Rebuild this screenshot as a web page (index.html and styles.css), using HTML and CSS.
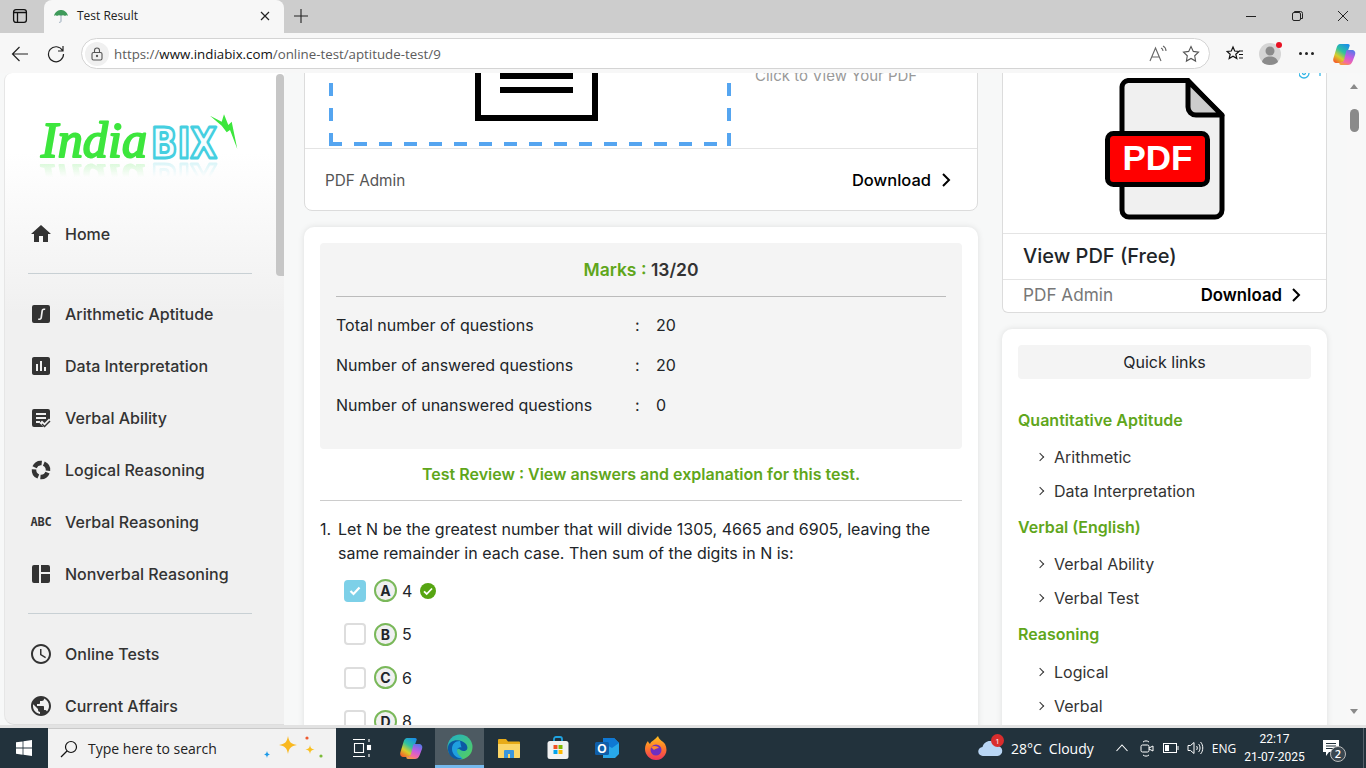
FILE: index.html
```html
<!DOCTYPE html>
<html lang="en">
<head>
	<meta charset="UTF-8">
	<title>Test Result</title>
	<link rel="stylesheet" href="styles.css">
</head>
<body>
<div class="window">
	<!-- tab strip -->
	<div class="tabstrip">
		<div class="tab-toggle">
			<svg width="16" height="16" viewBox="0 0 16 16" fill="none" stroke="#111" stroke-width="1.300"><rect x="1.600" y="1.600" width="12.800" height="12.800" rx="2.400"/><path d="M1.600 4.500h12.800M5.500 4.500v9.900"/></svg>
		</div>
		<div class="tab">
			<svg class="tab-favicon" width="16" height="16" viewBox="0 0 16 16"><path d="M1 8C2 3 6 2 8 2s6 1 7 6c-1-1-2-1-3 0-1-1-3-1-4 0-1-1-3-1-4 0-1-1-2-1-3 0z" fill="#3f9a5a"/><path d="M8 7v6c0 1-1 2-2 1" fill="none" stroke="#9ab" stroke-width="1"/></svg>
			<span class="tab-title">Test Result</span>
			<svg width="10" height="10" viewBox="0 0 10 10" stroke="#222" stroke-width="1.200"><path d="M1 1l8 8M9 1l-8 8"/></svg>
		</div>
		<svg class="tab-plus" width="14" height="14" viewBox="0 0 14 14" stroke="#222" stroke-width="1.100"><path d="M7 0v14M0 7h14"/></svg>
		<div class="win-controls">
			<svg width="46" height="12" viewBox="0 0 46 12" stroke="#222" stroke-width="1"><path d="M18 6.500h10"/></svg>
			<svg width="46" height="12" viewBox="0 0 46 12" fill="none" stroke="#222" stroke-width="1"><rect x="18.500" y="2.500" width="8" height="8" rx="1.500"/><path d="M20.500 2.500v-1h6a2 2 0 0 1 2 2v5h-1.500"/></svg>
			<svg width="46" height="12" viewBox="0 0 46 12" stroke="#222" stroke-width="1"><path d="M18 1l10 10M28 1L18 11"/></svg>
		</div>
	</div>

	<!-- address bar -->
	<div class="toolbar">
		<svg class="tool-back" width="18" height="18" viewBox="0 0 18 18" fill="none" stroke="#222" stroke-width="1.200"><path d="M17 9H1.500M8.500 2L1.500 9l7 7"/></svg>
		<svg class="tool-reload" width="18" height="18" viewBox="0 0 18 18" fill="none" stroke="#222" stroke-width="1.200"><path d="M15.500 5.500A7.500 7.500 0 1 0 16.500 9M16 1v5h-5"/></svg>
		<div class="omnibox">
			<span class="lock">
				<svg width="14" height="14" viewBox="0 0 14 14" fill="none" stroke="#555" stroke-width="1.100"><rect x="2" y="5.500" width="10" height="7.500" rx="1.500"/><path d="M4.500 5.500V3.500a2.500 2.500 0 0 1 5 0v2"/><circle cx="7" cy="9" r=".6" fill="#555"/></svg>
			</span>
			<span class="url">https://<b>www.indiabix.com</b>/online-test/aptitude-test/9</span>
			<svg class="omni-read" width="20" height="18" viewBox="0 0 20 18" fill="none" stroke="#666" stroke-width="1.100"><path d="M1 16L6.500 3 12 16M3 12h7M12 3c1.500.5 2 1.500 2 3M14 1c2 1 3 2.500 3 5"/></svg>
			<svg class="omni-star" width="18" height="18" viewBox="0 0 18 18" fill="none" stroke="#555" stroke-width="1.100"><path d="M9 1.500l2.300 4.900 5.200.7-3.800 3.700.9 5.300L9 13.500l-4.600 2.600.9-5.300L1.500 7.100l5.200-.7z"/></svg>
		</div>
		<svg class="tool-fav" width="18" height="18" viewBox="0 0 18 18" fill="none" stroke="#111" stroke-width="1.200"><path d="M7 2l1.700 4 4.300.4-3.200 2.800 1 4.300L7 11.200l-3.800 2.300 1-4.300L1 6.400 5.300 6zM13 6h4M13 9.500h4M13 13h4"/></svg>
		<span class="avatar">
			<svg width="22" height="22" viewBox="0 0 22 22" fill="#8b8b8b"><circle cx="11" cy="8" r="4.500"/><path d="M3 19c1-4 4-5.500 8-5.500s7 1.500 8 5.500c-2 2-5 3-8 3s-6-1-8-3z"/></svg>
			<i class="avatar-dot"></i>
		</span>
		<span class="tool-dots"><i></i><i></i><i></i></span>
		<svg class="tool-copilot" width="24" height="24" viewBox="0 0 24 24">
			<defs>
				<linearGradient id="cpA" x1=".8" y1="0" x2=".2" y2="1"><stop offset="0" stop-color="#1a8fe8"/><stop offset=".4" stop-color="#2fc2a0"/><stop offset=".7" stop-color="#d8cf2a"/><stop offset="1" stop-color="#f5602a"/></linearGradient>
				<linearGradient id="cpB" x1=".7" y1="0" x2=".3" y2="1"><stop offset="0" stop-color="#5a78e8"/><stop offset=".45" stop-color="#c65be0"/><stop offset=".8" stop-color="#f56aa0"/><stop offset="1" stop-color="#f59a40"/></linearGradient>
			</defs>
			<path id="cpLeft" d="M8 2h8c1.500 0 2 1 1.600 2L13 17c-1 3-2.500 4-4.500 4H5c-3 0-4.500-2-3.500-5L4.500 6C5.500 3 6.500 2 8 2z" fill="url(#cpA)"/>
			<path id="cpRight" d="M15 8h4.500c3 0 4.500 2 3.500 5l-2.500 6.500c-1 2.500-2.500 3.500-4.500 3.500H9c-1.500 0-2-1-1.500-2.500h1c2 0 3-1 3.700-3L14 10c.3-1 .5-2 1-2z" fill="url(#cpB)"/>
		</svg>
	</div>

	<!-- page -->
	<div class="viewport">
		<aside class="sidebar">
			<div class="logo">
				<svg width="204" height="68" viewBox="0 0 204 68">
					<defs>
						<linearGradient id="fade" x1="0" y1="0" x2="0" y2="1"><stop offset=".78" stop-color="#fff" stop-opacity=".2"/><stop offset="1" stop-color="#fff" stop-opacity="0"/></linearGradient>
						<mask id="fadeMask"><rect width="204" height="68" fill="url(#fade)"/></mask>
					</defs>
					<g mask="url(#fadeMask)"><use href="#logoMark" transform="translate(0 104) scale(1 -1)"/></g>
					<g id="logoMark">
						<text class="logo-india" x="2" y="48" textLength="106" lengthAdjust="spacingAndGlyphs">India</text>
						<text class="logo-bix" x="112" y="49" textLength="66" lengthAdjust="spacingAndGlyphs">BIX</text>
					</g>
					<path d="M171 6.700l11.700 6 2.300-7.400 4.300 10.700 3.400-3.300 5.600 27.300-7.300-19-3.300 2.300-5-6.600z" fill="#3de63d"/>
				</svg>
			</div>
			<a class="nav-row"><svg class="nav-icon" viewBox="0 0 24 24"><path d="M10 20v-6h4v6h5v-8h3L12 3 2 12h3v8z"/></svg>Home</a>
			<div class="nav-line"></div>
			<a class="nav-row"><svg class="nav-icon" viewBox="0 0 24 24"><path fill-rule="evenodd" d="M5 3h14a2 2 0 0 1 2 2v14a2 2 0 0 1-2 2H5a2 2 0 0 1-2-2V5a2 2 0 0 1 2-2zm9.800 3.500c-1.500 0-2.300.9-2.500 2.400l-.9 6.500c-.1.700-.4 1-.9 1H9.300l-.2 1.600h1.500c1.500 0 2.300-.9 2.500-2.400l.9-6.500c.1-.7.4-1 .9-1h1.200l.2-1.600z"/></svg>Arithmetic Aptitude</a>
			<a class="nav-row"><svg class="nav-icon" viewBox="0 0 24 24"><path d="M19 3H5c-1.100 0-2 .9-2 2v14c0 1.100.9 2 2 2h14c1.100 0 2-.9 2-2V5c0-1.100-.9-2-2-2zM9 17H7v-7h2v7zm4 0h-2V7h2v10zm4 0h-2v-4h2v4z"/></svg>Data Interpretation</a>
			<a class="nav-row"><svg class="nav-icon" viewBox="0 0 24 24"><path d="M5 3h14a2 2 0 0 1 2 2v8.500l-1-1-4.500 4.500-2.500-2.500-2.500 2.500L13 19.500 14.500 21H5a2 2 0 0 1-2-2V5a2 2 0 0 1 2-2zm2 4v2h10V7zm0 4v2h10v-2zm0 4v2h4v-2z"/><path d="M15.500 21.500l-3-3 1-1 2 2 5-5 1 1z"/></svg>Verbal Ability</a>
			<a class="nav-row"><svg class="nav-icon" viewBox="0 0 24 24"><circle class="nav-ring" cx="12" cy="12" r="7" transform="rotate(22 12 12)"/></svg>Logical Reasoning</a>
			<a class="nav-row"><span class="nav-abc">ABC</span>Verbal Reasoning</a>
			<a class="nav-row"><svg class="nav-icon" viewBox="0 0 24 24"><path d="M3 5a2 2 0 0 1 2-2h5v18H5a2 2 0 0 1-2-2zM12 3h7a2 2 0 0 1 2 2v5h-9zM12 12h9v7a2 2 0 0 1-2 2h-7z"/></svg>Nonverbal Reasoning</a>
			<div class="nav-line"></div>
			<a class="nav-row"><svg class="nav-icon" viewBox="0 0 24 24"><path d="M11.990 2C6.470 2 2 6.480 2 12s4.470 10 9.990 10C17.520 22 22 17.520 22 12S17.520 2 11.990 2zM12 20c-4.420 0-8-3.580-8-8s3.580-8 8-8 8 3.580 8 8-3.580 8-8 8z"/><path d="M12.500 7H11v6l5.250 3.150.75-1.230-4.500-2.670z"/></svg>Online Tests</a>
			<a class="nav-row"><svg class="nav-icon" viewBox="0 0 24 24"><path d="M12 2C6.480 2 2 6.480 2 12s4.480 10 10 10 10-4.480 10-10S17.520 2 12 2zm-1 17.930c-3.950-.49-7-3.850-7-7.930 0-.62.08-1.210.21-1.790L9 15v1c0 1.100.9 2 2 2v1.930zm6.900-2.540c-.26-.81-1-1.390-1.900-1.390h-1v-3c0-.55-.45-1-1-1H8v-2h2c.55 0 1-.45 1-1V7h2c1.100 0 2-.9 2-2v-.41c2.930 1.190 5 4.060 5 7.410 0 2.080-.8 3.970-2.100 5.390z"/></svg>Current Affairs</a>
			<div class="side-thumb"></div>
		</aside>

		<main class="main">
			<section class="pdf-card">
				<div class="pdf-body">
					<div class="dash-box">
						<svg width="123" height="100" viewBox="0 0 123 100" fill="none" stroke="#000"><path d="M3 0v97h117V0" stroke-width="6"/><path d="M25 55h73M25 69h73" stroke-width="6"/></svg>
					</div>
					<p class="pdf-hint">Click to View Your PDF</p>
				</div>
				<div class="pdf-foot">
					<span>PDF Admin</span>
					<span class="download">Download
						<svg width="10" height="16" viewBox="0 0 10 16" fill="none" stroke="#000" stroke-width="2"><path d="M2 2l6 6-6 6"/></svg>
					</span>
				</div>
			</section>

			<section class="result-card">
				<div class="marks-box">
					<h2 class="marks"><span>Marks :</span> 13/20</h2>
					<hr class="marks-line">
					<div class="stat"><span class="stat-name">Total number of questions</span><span class="stat-colon">:</span><span>20</span></div>
					<div class="stat"><span class="stat-name">Number of answered questions</span><span class="stat-colon">:</span><span>20</span></div>
					<div class="stat"><span class="stat-name">Number of unanswered questions</span><span class="stat-colon">:</span><span>0</span></div>
				</div>
				<h3 class="review">Test Review : View answers and explanation for this test.</h3>
				<hr class="review-line">
				<div class="question">
					<span class="q-num">1.</span>
					<p class="q-text">Let N be the greatest number that will divide 1305, 4665 and 6905, leaving the same remainder in each case. Then sum of the digits in N is:</p>
				</div>
				<div class="options">
					<div class="option">
						<span class="check check-on"><svg width="12" height="10" viewBox="0 0 12 10" fill="none" stroke="#fff" stroke-width="2.200"><path d="M1.500 5l3 3 6-6.500"/></svg></span>
						<span class="letter">A</span>4
						<svg class="right-mark" width="16" height="16" viewBox="0 0 16 16"><circle cx="8" cy="8" r="8" fill="#56a512"/><path d="M4 8.300l2.700 2.700L12 5.500" fill="none" stroke="#fff" stroke-width="1.800"/></svg>
					</div>
					<div class="option"><span class="check"></span><span class="letter">B</span>5</div>
					<div class="option"><span class="check"></span><span class="letter">C</span>6</div>
					<div class="option"><span class="check"></span><span class="letter">D</span>8</div>
				</div>
			</section>
		</main>

		<aside class="rail">
			<section class="ad-card">
				<div class="ad-art">
					<svg class="ad-choice" width="26" height="8" viewBox="0 0 26 8" fill="none" stroke="#35b6e6" stroke-width="1.300"><circle cx="5" cy="0" r="5"/><circle cx="5" cy="0" r="1.500"/><path d="M21 0v3"/></svg>
					<svg class="ad-pdf" width="120" height="142" viewBox="0 0 120 142">
						<path d="M23 2.500h60L117 38v94a7 7 0 0 1-7 7H24a7 7 0 0 1-7-7V9a7 7 0 0 1 6-6.500z" fill="#f0f0f0" stroke="#000" stroke-width="5"/>
						<path d="M83 3v26a8 8 0 0 0 8 8h26z" fill="#ccc" stroke="#000" stroke-width="5" stroke-linejoin="round"/>
						<rect x="2.500" y="55.500" width="100" height="51" rx="6" fill="#f00" stroke="#000" stroke-width="5"/>
						<text class="ad-pdf-text" x="52.500" y="92" text-anchor="middle">PDF</text>
					</svg>
				</div>
				<h3 class="ad-title">View PDF (Free)</h3>
				<div class="ad-foot">
					<span>PDF Admin</span>
					<span class="ad-download">Download
						<svg width="10" height="16" viewBox="0 0 10 16" fill="none" stroke="#000" stroke-width="2"><path d="M2 2l6 6-6 6"/></svg>
					</span>
				</div>
			</section>

			<section class="links-card">
				<div class="links-head">Quick links</div>
				<h4 class="links-group">Quantitative Aptitude</h4>
				<a class="link">Arithmetic</a>
				<a class="link">Data Interpretation</a>
				<h4 class="links-group">Verbal (English)</h4>
				<a class="link">Verbal Ability</a>
				<a class="link">Verbal Test</a>
				<h4 class="links-group">Reasoning</h4>
				<a class="link">Logical</a>
				<a class="link">Verbal</a>
			</section>
		</aside>

		<div class="page-scroll">
			<i class="arrow-up"></i>
			<div class="page-thumb"></div>
			<i class="arrow-down"></i>
		</div>
	</div>

	<!-- taskbar -->
	<div class="taskbar">
		<div class="start">
			<svg width="16" height="16" viewBox="0 0 16 16" fill="#fff"><path d="M0 2.300l6.600-.9v6.200H0zM7.400 1.300L16 0v7.600H7.400zM0 8.400h6.600v6.300L0 13.800zM7.400 8.400H16V16l-8.600-1.200z"/></svg>
		</div>
		<div class="search">
			<svg width="18" height="18" viewBox="0 0 18 18" fill="none" stroke="#111" stroke-width="1.200"><circle cx="11" cy="7" r="5.500"/><path d="M7 11l-6 6"/></svg>
			<span class="search-text">Type here to search</span>
			<svg class="search-art" width="62" height="30" viewBox="0 0 62 30">
				<path d="M24 2c1 6 3 8 9 9-6 1-8 3-9 9-1-6-3-8-9-9 6-1 8-3 9-9z" fill="#f9b820"/>
				<path d="M46 11c.5 3 1.500 4 4.500 4.500-3 .5-4 1.500-4.500 4.500-.5-3-1.500-4-4.500-4.500 3-.5 4-1.500 4.500-4.500z" fill="#f9c020"/>
				<path d="M3 17c.4 2 1 3 3 3.500-2 .5-2.600 1-3 3.500-.4-2.500-1-3-3-3.500 2-.5 2.600-1.500 3-3.500z" fill="#1f9be8"/>
				<circle cx="43" cy="4" r="1.600" fill="#ee5a30"/>
				<circle cx="57" cy="22" r="1.600" fill="#7cbb3a"/>
			</svg>
		</div>
		<div class="task-icons">
			<span class="task-icon"><svg width="20" height="20" viewBox="0 0 20 20" fill="none" stroke="#fff" stroke-width="1.100"><path d="M1 1.500h12M1 18.500h12M2.500 5.500h9v9h-9zM17 1v3M17 16v3"/><rect x="15.500" y="7.500" width="3" height="4" fill="#fff"/></svg></span>
			<span class="task-icon"><svg width="24" height="24" viewBox="0 0 24 24"><use href="#cpLeft"/><use href="#cpRight"/></svg></span>
			<span class="task-icon task-active">
				<svg width="26" height="26" viewBox="0 0 26 26">
					<defs><linearGradient id="edgeG" x1="0" y1="0" x2="1" y2="1"><stop offset="0" stop-color="#1fb0c8"/><stop offset="1" stop-color="#57d05a"/></linearGradient></defs>
					<circle cx="13" cy="13" r="12.500" fill="url(#edgeG)"/>
					<path d="M1 13C2 5 14 4 19 10c2 3 2 6-1 7-2 0-4-.5-5-1.500-1-1-3-1-3.500 1-.5 3 2 7 6 8.500C8 27 0 22 1 13z" fill="#0c59a4"/>
					<path d="M13 7c-5 0-8 3-8 8 0 4 3 8 7 9 2 .5 4 .5 4 .5-3-2-6.500-5-6-8.500.5-2 2.500-3 4.500-2.500-1-3-1-5.500-1.500-6.500z" fill="#1f9fe0"/>
				</svg>
			</span>
			<span class="task-icon"><svg width="24" height="22" viewBox="0 0 24 22"><path d="M1 3a1 1 0 0 1 1-1h7l2 2.500h11a1 1 0 0 1 1 1V20a1 1 0 0 1-1 1H2a1 1 0 0 1-1-1z" fill="#e8ab17"/><path d="M1 7h22v13a1 1 0 0 1-1 1H2a1 1 0 0 1-1-1z" fill="#fbd668"/><path d="M7 21v-7a1 1 0 0 1 1-1h8a1 1 0 0 1 1 1v7h-4v-4h-2v4z" fill="#3a96dd"/></svg></span>
			<span class="task-icon"><svg width="24" height="24" viewBox="0 0 24 24"><path d="M8 6V3a2 2 0 0 1 2-2h4a2 2 0 0 1 2 2v3" fill="none" stroke="#1fa3e0" stroke-width="1.800"/><rect x="1.500" y="5" width="21" height="18" rx="2.500" fill="#f2f2f2"/><rect x="7.500" y="9" width="4" height="4" fill="#f25022"/><rect x="12.500" y="9" width="4" height="4" fill="#7fba00"/><rect x="7.500" y="14" width="4" height="4" fill="#00a4ef"/><rect x="12.500" y="14" width="4" height="4" fill="#ffb900"/></svg></span>
			<span class="task-icon"><svg width="24" height="24" viewBox="0 0 24 24"><path d="M8 2h11l5 5v11l-4 4H8z" fill="#28a8ea"/><path d="M8 2h11l5 5-7 5-9-5z" fill="#0f78d4"/><rect x="0" y="6" width="14" height="13" rx="1.500" fill="#0f5ea8"/><text class="outlook-o" x="7" y="16.800" text-anchor="middle">O</text></svg></span>
			<span class="task-icon"><svg width="24" height="26" viewBox="0 0 24 26"><defs><linearGradient id="foxG" x1="0" y1="0" x2="0" y2="1"><stop offset="0" stop-color="#ffc11f"/><stop offset=".5" stop-color="#ff7a2a"/><stop offset="1" stop-color="#f0335e"/></linearGradient></defs><path d="M14 1c1 4 5 5 7 8 2 4 2 8 0 11-2 3-5 5-9 5-6 0-11-5-11-11 0-3 1-6 3-8 0 1 1 2 2 3 1-3 5-4 8-8z" fill="url(#foxG)"/><circle cx="12" cy="15" r="5.500" fill="#6f2fc0"/><path d="M7 12c3-2 7-1 8 1-2 0-4 1-5 2z" fill="#ff8a2a"/></svg></span>
		</div>
		<div class="tray">
			<div class="weather">
				<span class="weather-icon">
					<svg width="25" height="18" viewBox="0 0 25 18"><path d="M5 17a4.500 4.500 0 0 1-.5-9C5.500 4 9 1.500 13 2c3 .4 5 2.500 6 5a5 5 0 0 1 .5 10z" fill="#b9d6f5"/></svg>
					<i class="weather-badge">1</i>
				</span>
				<span class="weather-text">28°C</span>
				<span class="weather-text">Cloudy</span>
			</div>
			<span class="tray-icon tray-chev"><svg width="12" height="8" viewBox="0 0 12 8" fill="none" stroke="#fff" stroke-width="1.100"><path d="M.5 7l5.500-6 5.500 6"/></svg></span>
			<span class="tray-icon"><svg width="14" height="17" viewBox="0 0 14 17" fill="none" stroke="#fff" stroke-width="1"><path d="M3 2c2-1.500 4-1.500 6 0M3 15c2 1.500 4 1.500 6 0"/><rect x="1" y="5" width="8" height="7" rx="1.500"/><path d="M9 8l4-2v5l-4-2"/></svg></span>
			<span class="tray-icon"><svg width="16" height="10" viewBox="0 0 16 10" fill="none" stroke="#fff"><rect x=".5" y=".5" width="13" height="9"/><rect x="2" y="2" width="4" height="6" fill="#fff" stroke="none"/><path d="M15 3v4"/></svg></span>
			<span class="tray-icon"><svg width="17" height="14" viewBox="0 0 17 14" fill="none" stroke="#fff" stroke-width="1"><path d="M1 4.500h2.500L7 1.500v11L3.500 9.500H1zM9.500 5c1 1 1 3 0 4M11.500 3c2 2 2 6 0 8M13.500 1c3 3 3 9 0 12"/></svg></span>
			<span class="tray-lang">ENG</span>
			<div class="clock"><span>22:17</span><span>21-07-2025</span></div>
			<span class="notify">
				<svg width="20" height="18" viewBox="0 0 20 18" fill="#fff"><path d="M2 1h16v12H8l-3 4v-4H2z"/><path d="M5 4.500h10M5 7h10M5 9.500h7" stroke="#22323c" stroke-width="1"/></svg>
				<i class="notify-badge">2</i>
			</span>
			<i class="show-desktop"></i>
		</div>
	</div>
</div>
</body>
</html>
```

FILE: styles.css
```css
* {
	box-sizing: border-box;
}
html, body {
	margin: 0;
	height: 100%;
	overflow: hidden;
}
body {
	font-family: "Inter", "Liberation Sans", sans-serif;
	color: #212529;
}
.window {
	width: 1366px;
	height: 768px;
	display: flex;
	flex-direction: column;
	background: #f7f8f8;
}

/* tab strip */
.tabstrip {
	height: 33px;
	flex: none;
	background: #cdcdcd;
	display: flex;
	align-items: center;
	font-family: "Open Sans", "Liberation Sans", sans-serif;
}
.tab-toggle {
	width: 44px;
	display: flex;
	justify-content: center;
	padding-right: 4px;
	padding-bottom: 2px;
}
.tab {
	width: 240px;
	height: 33px;
	background: #f7f7f7;
	border-radius: 8px 8px 0 0;
	display: flex;
	align-items: center;
	padding: 0 14px 2px 9px;
	font-size: 12px;
	color: #222;
}
.tab-title {
	flex: 1;
	margin-left: 8px;
}
.tab-plus {
	margin-left: 10px;
	margin-bottom: 2px;
}
.win-controls {
	margin-left: auto;
	margin-bottom: 2px;
	display: flex;
}

/* toolbar */
.toolbar {
	height: 40px;
	flex: none;
	padding-top: 1px;
	background: #f7f7f7;
	display: flex;
	align-items: center;
	font-family: "Open Sans", "Liberation Sans", sans-serif;
}
.tool-back {
	margin-left: 11px;
}
.tool-reload {
	margin-left: 18px;
}
.omnibox {
	width: 1129px;
	height: 31px;
	margin-left: 16px;
	border: 1px solid #d4d4d4;
	border-radius: 16px;
	background: #fff;
	display: flex;
	align-items: center;
	padding-left: 3px;
	padding-right: 9px;
}
.lock {
	width: 24px;
	height: 24px;
	border-radius: 50%;
	background: #f0f0f0;
	display: flex;
	align-items: center;
	justify-content: center;
}
.url {
	flex: 1;
	margin-left: 5px;
	font-size: 13.300px;
	color: #5c5c5c;
}
.url b {
	font-weight: 400;
	color: #111;
}
.omni-star {
	margin-left: 13px;
}
.tool-fav {
	margin-left: 16px;
}
.avatar {
	position: relative;
	width: 22px;
	height: 22px;
	margin-left: 15px;
	border-radius: 50%;
	background: #d5d5d5;
	overflow: visible;
}
.avatar-dot {
	position: absolute;
	top: -1px;
	right: -1px;
	width: 6px;
	height: 6px;
	border-radius: 50%;
	background: #e81123;
}
.tool-dots {
	margin-left: 18px;
	display: flex;
	gap: 3px;
}
.tool-dots i {
	width: 3px;
	height: 3px;
	border-radius: 50%;
	background: #222;
}
.tool-copilot {
	margin-left: 18px;
}

/* page area */
.viewport {
	flex: 1;
	min-height: 0;
	display: flex;
	padding-left: 4px;
	overflow: hidden;
	background: #f7f8f8;
}

/* left menu */
.sidebar {
	position: relative;
	width: 280px;
	flex: none;
	background: linear-gradient(#fff 0, #fff 80px, #f0f0f0 240px);
	border-left: 1px solid #e6e6e6;
	border-bottom: 1px solid #dedede;
	border-radius: 8px 0 0 10px;
	overflow: hidden;
	padding: 0 24px 0 23px;
	color: #333;
}
.logo {
	height: 135px;
	padding-top: 36px;
	margin-left: 11px;
}
.logo-india {
	font-family: "Liberation Serif", serif;
	font-style: italic;
	font-size: 50px;
	fill: #3de63d;
	stroke: #3de63d;
	stroke-width: 2px;
	stroke-linejoin: round;
}
.logo-bix {
	font-family: "DejaVu Sans", sans-serif;
	font-weight: 700;
	font-size: 42px;
	fill: #f7fdff;
	stroke: #45cfe0;
	stroke-width: 3px;
	stroke-linejoin: round;
}
.nav-row {
	height: 52px;
	display: flex;
	align-items: center;
	gap: 12px;
	font-size: 16px;
	font-weight: 500;
}
.nav-icon {
	width: 24px;
	height: 24px;
	margin-left: 1px;
	fill: #333;
	flex: none;
}
.nav-ring {
	fill: none;
	stroke: #333;
	stroke-width: 4.500px;
	stroke-dasharray: 8.800 2.200;
}
.nav-abc {
	width: 24px;
	margin-left: 1px;
	flex: none;
	font-family: "DejaVu Sans Mono", monospace;
	font-weight: 700;
	font-size: 12px;
	letter-spacing: -.3px;
	text-align: center;
}
.nav-line {
	height: 1px;
	background: #c8d0d4;
	margin: 13px 8px 14px 0;
}
.side-thumb {
	position: absolute;
	top: 1px;
	right: 0;
	width: 8px;
	height: 202px;
	border-radius: 4px 4px 0 4px;
	background: #c6c6c6;
}

/* middle column */
.main {
	width: 674px;
	flex: none;
	margin-left: 20px;
}
.pdf-card {
	margin-top: -61px;
	background: #fff;
	border: 1px solid #dcdcdc;
	border-radius: 0 0 8px 8px;
}
.pdf-body {
	height: 136px;
	padding: 13px 24px 2px;
	display: flex;
	gap: 24px;
	border-bottom: 1px solid #e4e4e4;
}
.dash-box {
	width: 402px;
	height: 120px;
	padding: 0 0 25px 13px;
	display: flex;
	justify-content: center;
	align-items: flex-end;
	background:
		repeating-linear-gradient(90deg, #55a5f0 0 13px, transparent 13px 25px) left bottom / 100% 4px no-repeat,
		repeating-linear-gradient(0deg, #55a5f0 0 13px, transparent 13px 25px) left bottom / 4px 100% no-repeat,
		repeating-linear-gradient(0deg, #55a5f0 0 13px, transparent 13px 25px) right bottom / 4px 100% no-repeat;
}
.pdf-hint {
	margin: 40px 0 0;
	font-size: 15px;
	color: #999;
}
.pdf-foot {
	height: 61px;
	padding: 1px 26px 0 20px;
	display: flex;
	align-items: center;
	justify-content: space-between;
	font-size: 15.300px;
	color: #555;
}
.download {
	display: flex;
	align-items: center;
	gap: 10px;
	font-size: 16.500px;
	font-weight: 500;
	color: #000;
}
.result-card {
	margin-top: 16px;
	padding: 16px;
	background: #fff;
	border-radius: 10px;
	box-shadow: 0 0 6px rgba(0, 0, 0, .1);
}
.marks-box {
	height: 206px;
	padding: 0 16px;
	background: #f4f4f4;
	border-radius: 4px;
}
.marks {
	margin: 0;
	padding-top: 16px;
	height: 53px;
	text-align: center;
	font-size: 17.500px;
	font-weight: 600;
	color: #333;
}
.marks span {
	color: #5fa61b;
}
.marks-line {
	margin: 0 0 8px;
	border: 0;
	border-top: 1px solid #bbb;
}
.stat {
	height: 40px;
	display: flex;
	align-items: center;
	font-size: 16px;
}
.stat-name {
	width: 299px;
}
.stat-colon {
	width: 21px;
}
.review {
	margin: 15px 0 0;
	height: 36px;
	text-align: center;
	font-size: 16px;
	font-weight: 600;
	color: #5fa61b;
}
.review-line {
	margin: 0;
	border: 0;
	border-top: 1px solid #ccc;
}
.question {
	display: flex;
	margin-top: 16px;
	font-size: 16px;
	line-height: 24px;
}
.q-num {
	width: 18px;
	flex: none;
}
.q-text {
	margin: 0;
}
.options {
	margin-top: 4px;
}
.option {
	height: 43.500px;
	padding-left: 24px;
	display: flex;
	align-items: center;
	font-size: 16px;
}
.check {
	width: 22px;
	height: 22px;
	margin-right: 8px;
	border: 2px solid #ddd;
	border-radius: 4px;
	background: #fff;
	display: flex;
	align-items: center;
	justify-content: center;
}
.check-on {
	border-color: #7dd0e8;
	background: #7dd0e8;
}
.letter {
	width: 23px;
	height: 23px;
	margin-right: 5px;
	border: 2px solid #7ab85a;
	border-radius: 50%;
	background: #f0f0f0;
	font-size: 14px;
	font-weight: 700;
	display: flex;
	align-items: center;
	justify-content: center;
}
.right-mark {
	margin-left: 8px;
}

/* right column */
.rail {
	width: 325px;
	flex: none;
	margin-left: 24px;
}
.ad-card {
	background: #fff;
	border: 1px solid #dcdcdc;
	border-top: 0;
	border-radius: 0 0 6px 6px;
}
.ad-art {
	position: relative;
	height: 161px;
	padding: 5px 0 0 102px;
	border-bottom: 1px solid #e4e4e4;
}
.ad-choice {
	position: absolute;
	top: 0;
	right: 1px;
}
.ad-pdf {
	display: block;
}
.ad-pdf-text {
	font-family: "Liberation Sans", sans-serif;
	font-weight: 700;
	font-size: 35px;
	fill: #fff;
}
.ad-title {
	margin: 0;
	height: 46px;
	padding: 0 0 2px 20px;
	display: flex;
	align-items: center;
	font-size: 20px;
	font-weight: 500;
	color: #212529;
	border-bottom: 1px solid #e4e4e4;
}
.ad-foot {
	height: 32px;
	padding: 0 25px 3px 20px;
	display: flex;
	align-items: center;
	justify-content: space-between;
	font-size: 17.200px;
	color: #777;
}
.ad-download {
	display: flex;
	align-items: center;
	gap: 9px;
	font-weight: 600;
	font-size: 16.800px;
	color: #000;
}
.links-card {
	margin-top: 16px;
	padding: 16px;
	height: 500px;
	background: #fff;
	border-radius: 10px;
	box-shadow: 0 0 6px rgba(0, 0, 0, .1);
}
.links-head {
	height: 34px;
	margin-bottom: 29px;
	background: #f4f4f4;
	border-radius: 4px;
	display: flex;
	align-items: center;
	justify-content: center;
	font-size: 16px;
}
.links-group {
	margin: 0;
	height: 24px;
	line-height: 24px;
	font-size: 16px;
	font-weight: 600;
	color: #5fa61b;
}
.link {
	height: 34px;
	padding-left: 36px;
	display: flex;
	align-items: center;
	position: relative;
	font-size: 16px;
	color: #333;
}
.links-group + .link {
	margin-top: 8px;
}
.links-group:nth-of-type(3) + .link {
	margin-top: 9px;
}
.link + .links-group {
	margin-top: 7px;
}
.link::before {
	content: "";
	position: absolute;
	left: 19px;
	top: 14px;
	width: 5px;
	height: 5px;
	border-top: 1px solid #333;
	border-right: 1px solid #333;
	transform: rotate(45deg);
}

/* browser scrollbar */
.page-scroll {
	position: relative;
	width: 15px;
	margin-left: 20px;
	flex: none;
	height: 652px;
	background: #f8f8f8;
	border-radius: 0 8px 0 0;
}
.page-thumb {
	position: absolute;
	top: 36px;
	left: 3px;
	width: 9px;
	height: 23px;
	border-radius: 5px;
	background: #8a8a8a;
}
.arrow-up,
.arrow-down {
	position: absolute;
	left: 3px;
	width: 0;
	height: 0;
	border-left: 4.500px solid transparent;
	border-right: 4.500px solid transparent;
}
.arrow-up {
	top: 11px;
	border-bottom: 5px solid #8a8a8a;
}
.arrow-down {
	bottom: 11px;
	border-top: 5px solid #8a8a8a;
}

/* taskbar */
.taskbar {
	height: 43px;
	flex: none;
	border-top: 3px solid #e2e2e2;
	background: #22323c;
	display: flex;
	color: #fff;
	font-family: "Open Sans", "Liberation Sans", sans-serif;
}
.start {
	width: 48px;
	display: flex;
	align-items: center;
	justify-content: center;
}
.search {
	width: 288px;
	background: #f2f2f2;
	border-top: 1px solid #c9c9c9;
	display: flex;
	align-items: center;
	padding-left: 12px;
	color: #222;
}
.search-text {
	margin-left: 10px;
	flex: 1;
	font-size: 14px;
}
.search-art {
	margin-right: 10px;
}
.task-icons {
	display: flex;
	padding-left: 1px;
}
.task-icon {
	width: 49px;
	display: flex;
	align-items: center;
	justify-content: center;
}
.task-active {
	background: #4d5a62;
	border-bottom: 3px solid #76b9ed;
}
.outlook-o {
	font-family: "Liberation Sans", sans-serif;
	font-weight: 700;
	font-size: 12px;
	fill: #fff;
}
.tray {
	margin-left: auto;
	display: flex;
	align-items: center;
	font-size: 12px;
}
.weather {
	width: 130px;
	display: flex;
	align-items: center;
	font-size: 14px;
}
.weather-icon {
	position: relative;
	display: flex;
	width: 33px;
}
.weather-badge {
	position: absolute;
	top: -5px;
	left: 13px;
	width: 13px;
	height: 13px;
	border-radius: 50%;
	background: #d92d2d;
	font-style: normal;
	font-size: 8px;
	line-height: 13px;
	text-align: center;
}
.weather-text + .weather-text {
	margin-left: 7px;
}
.tray-icon {
	width: 24px;
	display: flex;
	justify-content: center;
}
.tray-chev {
	margin-left: 2px;
	margin-right: 1px;
}
.tray-lang {
	width: 34px;
	text-align: center;
}
.clock {
	width: 67px;
	display: flex;
	flex-direction: column;
	align-items: center;
	line-height: 18px;
	font-family: "Roboto", sans-serif;
}
.notify {
	position: relative;
	width: 32px;
	margin-left: 7px;
	display: flex;
	justify-content: center;
}
.notify-badge {
	position: absolute;
	top: 7px;
	left: 15px;
	width: 16px;
	height: 16px;
	border-radius: 50%;
	border: 1px solid #bbb;
	background: #3a4750;
	font-style: normal;
	font-size: 11px;
	font-weight: 600;
	line-height: 14px;
	text-align: center;
}
.show-desktop {
	width: 17px;
	height: 40px;
	border-right: 1px solid #55616a;
	margin-right: 2px;
}
```
